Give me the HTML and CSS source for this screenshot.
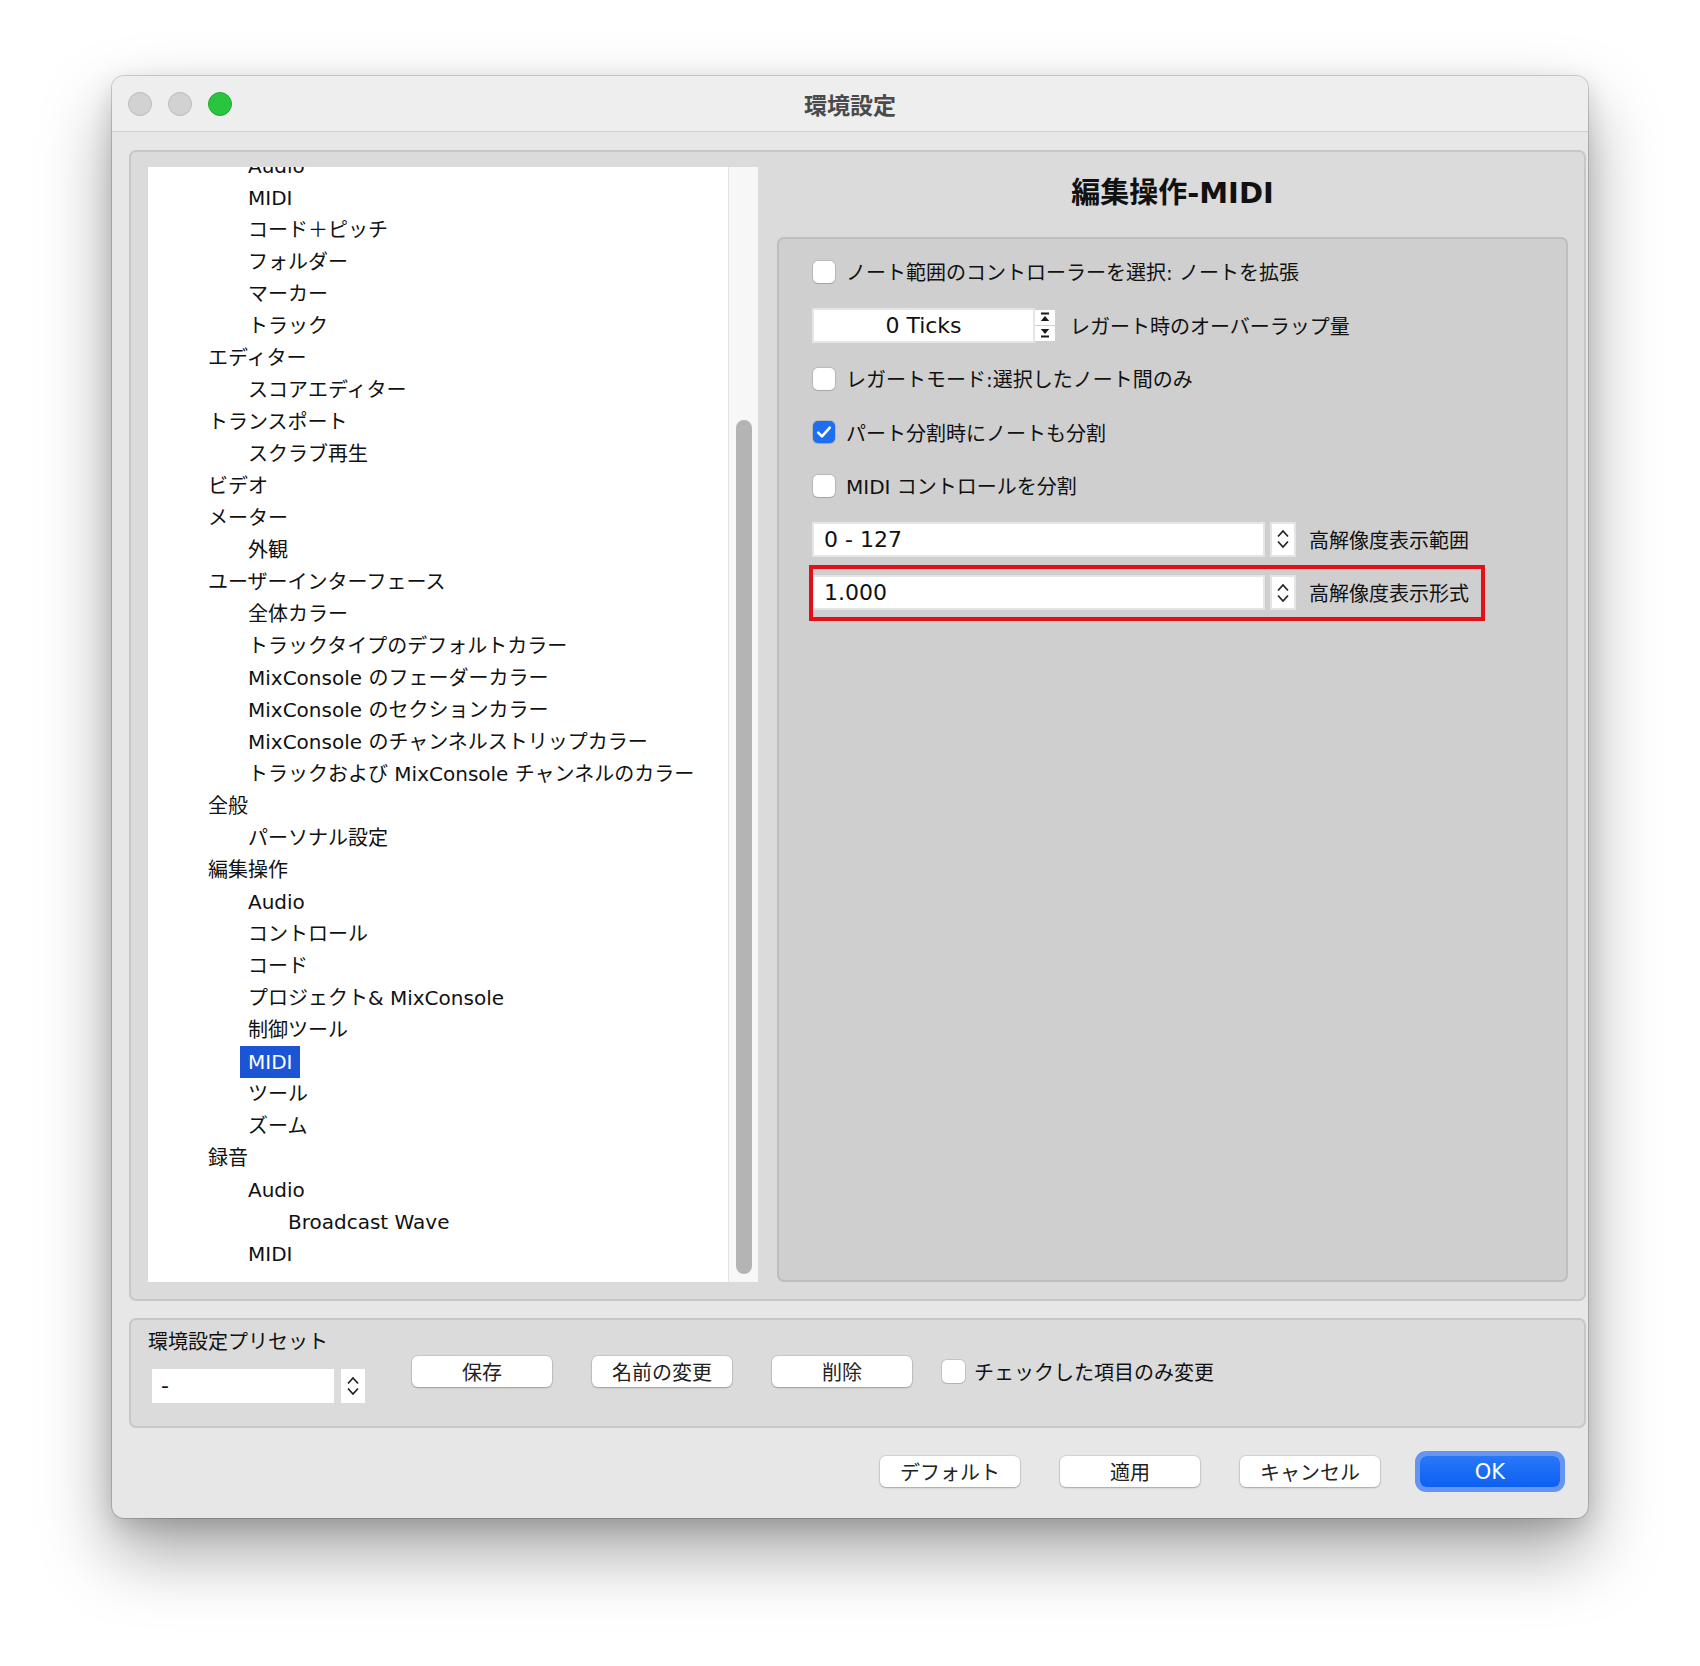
FILE: index.html
```html
<!DOCTYPE html>
<html lang="ja">
<head>
<meta charset="utf-8">
<title>環境設定</title>
<link rel="stylesheet" href="styles.css">
</head>
<body>
<div class="stage">
<div class="window">
  <div class="titlebar">
    <div class="lights">
      <span class="light gray"></span>
      <span class="light gray"></span>
      <span class="light green"></span>
    </div>
    <div class="title">環境設定</div>
    <div></div>
  </div>
  <div class="content">
    <div class="main-group">
      <div class="tree-wrap">
        <div class="tree">
          <ul class="tree-list">
            <li class="lv2">Audio</li>
            <li class="lv2">MIDI</li>
            <li class="lv2">コード＋ピッチ</li>
            <li class="lv2">フォルダー</li>
            <li class="lv2">マーカー</li>
            <li class="lv2">トラック</li>
            <li class="lv1">エディター</li>
            <li class="lv2">スコアエディター</li>
            <li class="lv1">トランスポート</li>
            <li class="lv2">スクラブ再生</li>
            <li class="lv1">ビデオ</li>
            <li class="lv1">メーター</li>
            <li class="lv2">外観</li>
            <li class="lv1">ユーザーインターフェース</li>
            <li class="lv2">全体カラー</li>
            <li class="lv2">トラックタイプのデフォルトカラー</li>
            <li class="lv2">MixConsole のフェーダーカラー</li>
            <li class="lv2">MixConsole のセクションカラー</li>
            <li class="lv2">MixConsole のチャンネルストリップカラー</li>
            <li class="lv2">トラックおよび MixConsole チャンネルのカラー</li>
            <li class="lv1">全般</li>
            <li class="lv2">パーソナル設定</li>
            <li class="lv1">編集操作</li>
            <li class="lv2">Audio</li>
            <li class="lv2">コントロール</li>
            <li class="lv2">コード</li>
            <li class="lv2">プロジェクト&amp; MixConsole</li>
            <li class="lv2">制御ツール</li>
            <li class="lv2"><span class="sel">MIDI</span></li>
            <li class="lv2">ツール</li>
            <li class="lv2">ズーム</li>
            <li class="lv1">録音</li>
            <li class="lv2">Audio</li>
            <li class="lv3">Broadcast Wave</li>
            <li class="lv2">MIDI</li>
          </ul>
        </div>
        <div class="vscroll"><div class="thumb"></div></div>
      </div>
      <div class="right">
        <h1 class="page-title">編集操作-MIDI</h1>
        <div class="inner-box">
          <div class="row">
            <span class="cb"></span>
            <span class="label">ノート範囲のコントローラーを選択: ノートを拡張</span>
          </div>
          <div class="row">
            <div class="field ticks">0 Ticks</div>
            <div class="tick-step">
              <span class="tick-btn"><svg width="12" height="12" viewBox="0 0 12 12"><rect x="2" y="1.5" width="8" height="2" fill="#1a1a1a"/><path d="M1.8 10 L6 5 L10.2 10 Z" fill="#1a1a1a"/></svg></span>
              <span class="tick-btn"><svg width="12" height="12" viewBox="0 0 12 12"><path d="M1.8 2 L6 7 L10.2 2 Z" fill="#1a1a1a"/><rect x="2" y="8.5" width="8" height="2" fill="#1a1a1a"/></svg></span>
            </div>
            <span class="label after-ticks">レガート時のオーバーラップ量</span>
          </div>
          <div class="row">
            <span class="cb"></span>
            <span class="label">レガートモード:選択したノート間のみ</span>
          </div>
          <div class="row">
            <span class="cb on"><svg width="16" height="14" viewBox="0 0 16 14"><path d="M2.2 7.6 L6 11.4 L13.8 2.6" fill="none" stroke="#fff" stroke-width="2.6" stroke-linecap="round" stroke-linejoin="round"/></svg></span>
            <span class="label">パート分割時にノートも分割</span>
          </div>
          <div class="row">
            <span class="cb"></span>
            <span class="label">MIDI コントロールを分割</span>
          </div>
          <div class="row">
            <div class="field wide">0 - 127</div>
            <div class="spin"><svg width="14" height="24" viewBox="0 0 14 24"><path d="M2 9.5 L7 4 L12 9.5 M2 14.5 L7 20 L12 14.5" fill="none" stroke="#222" stroke-width="1.7"/></svg></div>
            <span class="label after-spin">高解像度表示範囲</span>
          </div>
          <div class="row marked">
            <div class="field wide">1.000</div>
            <div class="spin"><svg width="14" height="24" viewBox="0 0 14 24"><path d="M2 9.5 L7 4 L12 9.5 M2 14.5 L7 20 L12 14.5" fill="none" stroke="#222" stroke-width="1.7"/></svg></div>
            <span class="label after-spin">高解像度表示形式</span>
            <div class="highlight"></div>
          </div>
        </div>
      </div>
    </div>

    <div class="preset">
      <div class="preset-left">
        <div class="preset-label">環境設定プリセット</div>
        <div class="preset-field-row">
          <div class="preset-field">-</div>
          <div class="spin small"><svg width="14" height="24" viewBox="0 0 14 24"><path d="M2 9.5 L7 4 L12 9.5 M2 14.5 L7 20 L12 14.5" fill="none" stroke="#222" stroke-width="1.7"/></svg></div>
        </div>
      </div>
      <div class="preset-buttons">
        <div class="btn">保存</div>
        <div class="btn">名前の変更</div>
        <div class="btn">削除</div>
        <div class="preset-check">
          <span class="cb"></span>
          <span class="label">チェックした項目のみ変更</span>
        </div>
      </div>
    </div>

    <div class="footer">
      <div class="btn">デフォルト</div>
      <div class="btn">適用</div>
      <div class="btn">キャンセル</div>
      <div class="btn ok">OK</div>
    </div>
  </div>
</div>
</div>
</body>
</html>
```

FILE: styles.css
```css
* { box-sizing: border-box; }

html, body {
  margin: 0;
  background: #ffffff;
}

body {
  font-family: "DejaVu Sans", "Noto Sans CJK JP", sans-serif;
  font-size: 20px;
  color: #111;
}

.stage {
  height: 1666px;
  padding: 76px 0 0 112px;
}

.window {
  width: 1476px;
  height: 1442px;
  border-radius: 12px;
  background: #e7e7e7;
  box-shadow: 0 0 0 1px rgba(0, 0, 0, 0.16), 0 34px 70px rgba(0, 0, 0, 0.36), 0 8px 24px rgba(0, 0, 0, 0.14);
  overflow: hidden;
  display: flex;
  flex-direction: column;
}

.titlebar {
  height: 56px;
  flex: none;
  background: #eeeeee;
  border-bottom: 1px solid #d0d0d0;
  display: grid;
  grid-template-columns: 1fr auto 1fr;
  align-items: center;
}

.lights {
  display: flex;
  gap: 16px;
  padding-left: 16px;
}

.light {
  width: 24px;
  height: 24px;
  border-radius: 50%;
}

.light.gray {
  background: #d2d2d2;
  border: 1px solid #bcbcbc;
}

.light.green {
  background: #29c53e;
  border: 1px solid #20a834;
}

.title {
  font-size: 23px;
  font-weight: bold;
  color: #4a4a4a;
}

.content {
  flex: 1;
  padding: 18px 2px 31px 17px;
  display: flex;
  flex-direction: column;
}

.main-group {
  height: 1151px;
  flex: none;
  border: 2px solid #c7c7c7;
  border-radius: 7px;
  background: #dbdbdb;
  padding: 15px 16px 17px 17px;
  display: flex;
  gap: 19px;
}

.tree-wrap {
  width: 610px;
  flex: none;
  display: flex;
  background: #ffffff;
}

.tree {
  flex: 1;
  overflow: hidden;
}

.tree-list {
  list-style: none;
  margin: -17px 0 0;
  padding: 0;
}

.tree-list li {
  height: 32px;
  line-height: 32px;
  white-space: nowrap;
  color: #111;
}

.lv1 { padding-left: 60px; }
.lv2 { padding-left: 100px; }
.lv3 { padding-left: 140px; }

.sel {
  display: inline-block;
  height: 32px;
  margin-left: -8px;
  padding: 0 8px;
  background: #1b55d6;
  color: #ffffff;
}

.vscroll {
  width: 30px;
  flex: none;
  background: #f7f7f7;
  border-left: 1px solid #e3e3e3;
  padding: 253px 6px 8px 7px;
  display: flex;
}

.thumb {
  flex: 1;
  border-radius: 8px;
  background: #b4b4b4;
}

.right {
  flex: 1;
  display: flex;
  flex-direction: column;
}

.page-title {
  margin: 0;
  height: 52px;
  line-height: 52px;
  text-align: center;
  font-size: 29px;
  font-weight: bold;
  color: #111;
}

.inner-box {
  margin-top: 18px;
  flex: 1;
  border: 2px solid #bebebe;
  border-radius: 7px;
  background: #cfcfcf;
  padding: 6px 0 0 34px;
}

.row {
  height: 53.5px;
  display: flex;
  align-items: center;
}

.row.marked {
  position: relative;
}

.cb {
  width: 22px;
  height: 22px;
  flex: none;
  border-radius: 5px;
  background: #ffffff;
  box-shadow: 0 0 0 1px rgba(0, 0, 0, 0.1), 0 1px 1px rgba(0, 0, 0, 0.1);
  margin-right: 11px;
}

.cb.on {
  background: #1c6ef3;
  display: flex;
  align-items: center;
  justify-content: center;
}

.label {
  white-space: nowrap;
}

.field {
  height: 35px;
  background: #ffffff;
  border: 2px solid #e5e5e5;
  display: flex;
  align-items: center;
  font-size: 22px;
  color: #111;
}

.field.ticks {
  width: 223px;
  margin-left: -1px;
  justify-content: center;
}

.tick-step {
  width: 20px;
  height: 35px;
  display: flex;
  flex-direction: column;
  justify-content: space-between;
  padding: 2px 0;
}

.tick-btn {
  height: 15px;
  background: #ffffff;
  display: flex;
  align-items: center;
  justify-content: center;
}

.after-ticks {
  margin-left: 15px;
}

.field.wide {
  width: 453px;
  margin-left: -1px;
  padding-left: 10px;
}

.spin {
  width: 26px;
  height: 35px;
  margin-left: 5px;
  background: #ffffff;
  border: 2px solid #e5e5e5;
  display: flex;
  align-items: center;
  justify-content: center;
}

.after-spin {
  margin-left: 13px;
}

.highlight {
  position: absolute;
  left: -4px;
  top: -1px;
  width: 676px;
  height: 56px;
  border: 4px solid #e2101b;
}

.preset {
  margin-top: 17px;
  height: 110px;
  flex: none;
  border: 2px solid #c7c7c7;
  border-radius: 7px;
  background: #dbdbdb;
  padding: 8px 17px 0;
  display: flex;
}

.preset-left {
  width: 217px;
  flex: none;
}

.preset-label {
  height: 28px;
  line-height: 28px;
  white-space: nowrap;
}

.preset-field-row {
  margin-top: 13px;
  padding-left: 4px;
  display: flex;
}

.preset-field {
  width: 182px;
  height: 34px;
  background: #ffffff;
  padding-left: 9px;
  line-height: 34px;
  font-size: 22px;
}

.spin.small {
  width: 24px;
  height: 34px;
  margin-left: 7px;
  border: none;
}

.preset-buttons {
  margin-left: 47px;
  margin-top: 28px;
  height: 31px;
  display: flex;
  align-items: center;
  gap: 40px;
}

.btn {
  width: 140px;
  height: 31px;
  flex: none;
  border-radius: 6px;
  background: #ffffff;
  box-shadow: 0 0 0 1px rgba(0, 0, 0, 0.08), 0 1px 2px rgba(0, 0, 0, 0.22);
  display: flex;
  align-items: center;
  justify-content: center;
  font-size: 20px;
  color: #222;
}

.preset-check {
  margin-left: -10px;
  display: flex;
  align-items: center;
}

.preset-check .cb {
  width: 23px;
  height: 23px;
  margin-right: 9px;
}

.footer {
  margin-top: 28px;
  display: flex;
  justify-content: flex-end;
  gap: 40px;
  padding-right: 26px;
}

.btn.ok {
  background: linear-gradient(#2a78f8, #0c60f2);
  color: #ffffff;
  font-size: 21px;
  box-shadow: 0 0 0 5px rgba(78, 134, 238, 0.85);
}
```
